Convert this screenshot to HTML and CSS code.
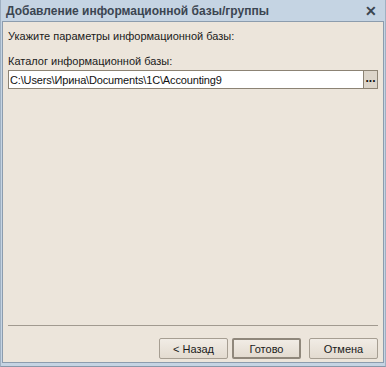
FILE: index.html
```html
<!DOCTYPE html>
<html lang="ru">
<head>
  <meta charset="UTF-8" />
  <title>Добавление информационной базы/группы</title>
  <link rel="stylesheet" href="styles.css">
</head>
<body>
  <div class="window">
    <div class="titlebar">
      <span class="title">Добавление информационной базы/группы</span>
      <span class="close">&#x2715;</span>
    </div>

    <div class="content">
      <div class="main">
        <p class="hint">Укажите параметры информационной базы:</p>
        <label class="field-label">Каталог информационной базы:</label>
        <div class="path-row">
          <input class="path-input" type="text" value="C:\Users\Ирина\Documents\1C\Accounting9">
          <button class="browse-btn">...</button>
        </div>
      </div>

      <div class="footer">
        <button class="btn">&lt; Назад</button>
        <button class="btn default">Готово</button>
        <button class="btn cancel">Отмена</button>
      </div>
    </div>
  </div>
</body>
</html>
```

FILE: styles.css
```css
body {
  margin: 0;
  padding: 0;
  font-family: 'Liberation Sans', Arial, sans-serif;
  font-size: 11px;
  color: #1a1a1a;
  background-color: #c5d4e3;
}

.window {
  width: 386px;
  height: 367px;
  display: flex;
  flex-direction: column;
  box-sizing: border-box;
  background-color: #c5d4e3;
  border-left: 1px solid #9fb0c2;
  border-right: 1px solid #9fb0c2;
  border-bottom: 1px solid #8797a8;
}

.titlebar {
  height: 21px;
  display: flex;
  align-items: center;
  justify-content: space-between;
  padding: 1px 8px 0 5px;
  box-sizing: border-box;
  flex-shrink: 0;
}

.title {
  font-weight: bold;
  font-size: 12px;
  color: #3b4551;
}

.close {
  font-size: 14px;
  font-weight: bold;
  color: #3b4551;
}

.content {
  flex: 1;
  margin: 0 1px 3px 1px;
  background-color: #ece5db;
  border: 1px solid #8c9cad;
  display: flex;
  flex-direction: column;
  padding: 0 5px;
}

.main {
  flex: 1;
}

.hint {
  margin: 6px 0 0 0;
  line-height: 16px;
}

.field-label {
  display: block;
  margin-top: 9px;
  line-height: 16px;
}

.path-row {
  display: flex;
  margin-top: 1px;
  height: 19px;
}

.path-input {
  flex: 1;
  min-width: 0;
  height: 19px;
  box-sizing: border-box;
  border: 1px solid #8c8374;
  border-right: none;
  background: #fff;
  font-family: inherit;
  font-size: 11px;
  letter-spacing: -0.15px;
  color: #111;
  padding: 0 1px;
  margin: 0;
  outline: none;
}

.browse-btn {
  width: 15px;
  height: 19px;
  box-sizing: border-box;
  border: 1px solid #8c8374;
  background-color: #dcd5ca;
  font-family: inherit;
  font-size: 12px;
  font-weight: bold;
  padding: 0 0 4px 0;
  margin: 0;
  line-height: 1;
  color: #111;
}

.footer {
  border-top: 1px solid #a19a90;
  display: flex;
  justify-content: flex-end;
  gap: 4px;
  padding: 12px 0 3px 0;
}

.btn {
  width: 69px;
  height: 21px;
  box-sizing: border-box;
  border: 1px solid #a69e92;
  border-radius: 2px;
  background: linear-gradient(#f1ece5, #e3dbd0);
  font-family: inherit;
  font-size: 11px;
  color: #1a1a1a;
  padding: 0;
}

.btn.default {
  border: 2px solid #8f877b;
}

.btn.cancel {
  margin-left: 4px;
}
```
